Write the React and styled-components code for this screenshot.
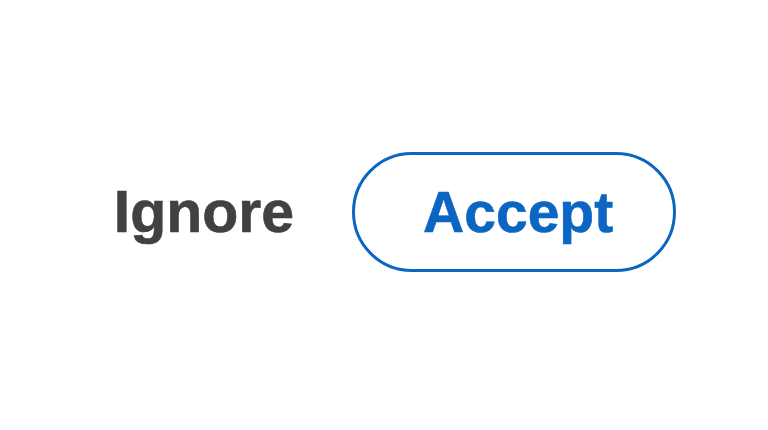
import React from "react";
import styled, { createGlobalStyle } from "styled-components";

const GlobalStyle = createGlobalStyle`
  html, body {
    margin: 0;
    padding: 0;
    background: #ffffff;
  }
  body {
    font-family: "Liberation Sans", Arial, sans-serif;
  }
`;

const Page = styled.div`
  width: 768px;
  height: 430px;
  display: flex;
  align-items: center;
  justify-content: center;
  box-sizing: border-box;
  padding-left: 22px;
  padding-bottom: 6px;
`;

const Actions = styled.div`
  display: flex;
  align-items: center;
  gap: 58px;
`;

const TextButton = styled.button`
  border: none;
  background: none;
  padding: 0;
  font-family: "Liberation Sans", Arial, sans-serif;
  font-weight: 700;
  font-size: 59px;
  color: #414141;
  -webkit-text-stroke: 0.6px #414141;
  cursor: pointer;
`;

const PillButton = styled.button`
  box-sizing: border-box;
  width: 324px;
  height: 120px;
  border: 3px solid #0a66c2;
  border-radius: 60px;
  background: #fff;
  display: flex;
  align-items: center;
  justify-content: center;
  padding: 0 0 0 8px;
  font-family: "Liberation Sans", Arial, sans-serif;
  font-weight: 700;
  font-size: 57px;
  color: #0a66c2;
  -webkit-text-stroke: 0.6px #0a66c2;
  cursor: pointer;
`;

export default function App() {
  return (
    <>
      <GlobalStyle />
      <Page>
        <Actions>
          <TextButton>Ignore</TextButton>
          <PillButton>Accept</PillButton>
        </Actions>
      </Page>
    </>
  );
}
